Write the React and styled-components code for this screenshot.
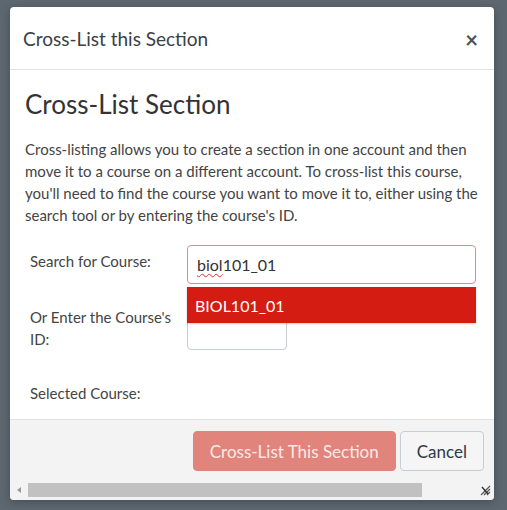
import React from 'react';
import styled, {createGlobalStyle} from 'styled-components';

const GlobalStyle = createGlobalStyle`
  html, body {
    margin: 0;
    padding: 0;
    background: #5c6770;
    font-family: Lato, "Open Sans", sans-serif;
  }
`;

const Page = styled.div`
  width: 507px;
  height: 510px;
  padding: 7px 0 0 10px;
  box-sizing: border-box;
`;

const Dialog = styled.div`
  width: 484px;
  height: 493px;
  background: #fff;
  border-radius: 4px;
  box-shadow: 0 2px 8px rgba(0, 0, 0, 0.25);
  display: flex;
  flex-direction: column;
  overflow: hidden;
`;

const Header = styled.div`
  height: 63px;
  flex-shrink: 0;
  display: flex;
  align-items: center;
  justify-content: space-between;
  padding: 0 16px 0 13px;
  border-bottom: 1px solid #dfe3e5;
  box-sizing: border-box;
`;

const HeaderTitle = styled.h1`
  margin: 0;
  font-size: 19px;
  font-weight: 400;
  color: #394146;
`;

const CloseButton = styled.span`
  font-size: 22px;
  color: #4a5359;
  line-height: 1;
  margin-top: 4px;
  font-weight: 700;
`;

const Body = styled.div`
  flex: 1;
  padding: 18px 15px 0 15px;
  position: relative;
`;

const Heading = styled.h2`
  margin: 0 0 18px;
  font-size: 26px;
  font-weight: 400;
  color: #333;
  line-height: 32px;
`;

const Intro = styled.p`
  margin: 0 0 19px;
  font-size: 15px;
  line-height: 22px;
  color: #444;
`;

const Form = styled.div`
  display: grid;
  grid-template-columns: 157px 289px;
  row-gap: 22px;
  padding-left: 5px;
  font-size: 15px;
  color: #444;
`;

const Label = styled.div`
  line-height: 22px;
  padding-top: ${props => props.$top || 0}px;
  padding-right: 14px;
`;

const Field = styled.div`
  position: relative;
  height: ${props => props.$h || 39}px;
`;

const TextInput = styled.div`
  box-sizing: border-box;
  width: ${props => props.$w || '100%'};
  height: ${props => props.$h || 39}px;
  border: 1px solid ${props => props.$focus ? '#e58b85' : '#c7cdd1'};
  border-radius: 4px;
  padding: 0 9px;
  display: flex;
  align-items: center;
  font-size: 16px;
  color: #333;
  background: #fff;
  margin-top: ${props => props.$mt || 0}px;
`;

const Misspelled = styled.span`
  text-decoration: underline wavy #e0302a;
  text-decoration-thickness: 1px;
  text-underline-offset: 2px;
`;

const Menu = styled.div`
  position: absolute;
  left: 0;
  right: 0;
  top: 42px;
  z-index: 2;
`;

const MenuItem = styled.div`
  height: 36px;
  background: #d41c12;
  color: #fff;
  font-size: 16px;
  display: flex;
  align-items: center;
  padding-left: 8px;
  box-shadow: 0 1px 2px rgba(0, 0, 0, 0.2);
`;

const Footer = styled.div`
  flex-shrink: 0;
  background: #f3f3f3;
  border-top: 1px solid #dfe3e5;
  display: flex;
  flex-direction: column;
`;

const ButtonRow = styled.div`
  display: flex;
  justify-content: flex-end;
  gap: 4px;
  padding: 11px 10px 11px 0;
`;

const Button = styled.button`
  height: 40px;
  border-radius: 4px;
  font-family: Lato, sans-serif;
  font-size: 17px;
  padding: 0 ${props => props.$px || 16}px;
  border: 1px solid ${props => props.$primary ? '#e0847c' : '#c7cdd1'};
  background: ${props => props.$primary ? '#e0847c' : '#f5f5f5'};
  color: ${props => props.$primary ? '#fbe9e7' : '#2d3b45'};
`;

const ScrollBar = styled.div`
  height: 16px;
  display: flex;
  align-items: center;
  padding: 0 0 2px 0;
`;

const Arrow = styled.div`
  width: 18px;
  display: flex;
  justify-content: center;
  &::before {
    content: '';
    border-style: solid;
    border-width: 3px 4px 3px 0;
    border-color: transparent #9a9a9a transparent transparent;
  }
`;

const Thumb = styled.div`
  width: 394px;
  height: 14px;
  background: #c1c1c1;
`;

const Grip = styled.svg`
  margin-left: auto;
  margin-right: 3px;
`;

export default function App() {
  return (
    <Page>
      <GlobalStyle/>
      <Dialog>
        <Header>
          <HeaderTitle>Cross-List this Section</HeaderTitle>
          <CloseButton>×</CloseButton>
        </Header>
        <Body>
          <Heading>Cross-List Section</Heading>
          <Intro>
            Cross-listing allows you to create a section in one account and then
            move it to a course on a different account. To cross-list this course,
            you'll need to find the course you want to move it to, either using
            the search tool or by entering the course's ID.
          </Intro>
          <Form>
            <Label $top={5}>Search for Course:</Label>
            <Field>
              <TextInput $focus><Misspelled>biol</Misspelled>101_01</TextInput>
              <Menu>
                <MenuItem>BIOL101_01</MenuItem>
              </Menu>
            </Field>
            <Label>Or Enter the Course's ID:</Label>
            <Field $h={44}>
              <TextInput $w="100px" $h={34} $mt={10}/>
            </Field>
            <Label $top={10}>Selected Course:</Label>
            <div/>
          </Form>
        </Body>
        <Footer>
          <ButtonRow>
            <Button $primary>Cross-List This Section</Button>
            <Button>Cancel</Button>
          </ButtonRow>
          <ScrollBar>
            <Arrow/>
            <Thumb/>
            <Grip width="12" height="12" viewBox="0 0 12 12">
              <path d="M2 11 L11 2 M5 11 L11 5 M8 11 L11 8" stroke="#555" strokeWidth="1.2"/>
              <path d="M3 3 L9 10" stroke="#333" strokeWidth="1.4"/>
            </Grip>
          </ScrollBar>
        </Footer>
      </Dialog>
    </Page>
  );
}
